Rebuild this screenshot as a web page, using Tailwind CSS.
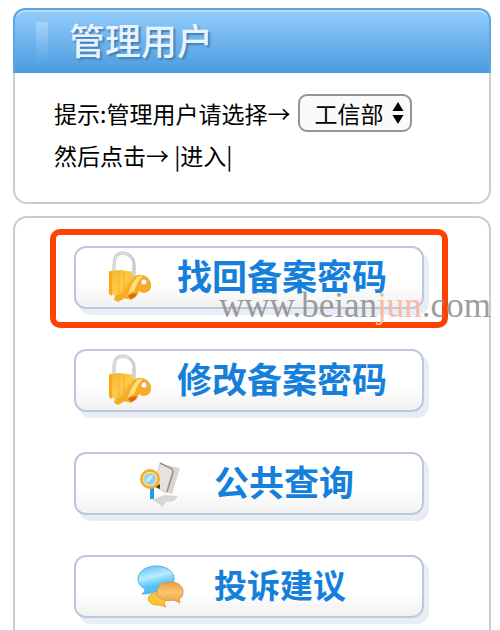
<!DOCTYPE html>
<html lang="zh-CN">
  <head>
    <meta charset="UTF-8" />
    <meta name="viewport" content="width=device-width, initial-scale=1.0" />
    <script src="https://cdn.jsdelivr.net/npm/@tailwindcss/browser@4"></script>
    <title>管理用户</title>
  </head>
  <body class="flex h-screen flex-col gap-3 overflow-hidden bg-white pt-2 pr-[9px] pl-[13px] font-['Noto_Sans_CJK_SC',sans-serif] text-black">
    <!-- shared icon: padlock with key -->
    <svg class="absolute size-0">
      <defs>
        <linearGradient id="gold" x1="0" y1="0" x2="1" y2="1">
          <stop offset="0" stop-color="#fbb52a" />
          <stop offset="0.5" stop-color="#fdca48" />
          <stop offset="1" stop-color="#f0931b" />
        </linearGradient>
        <symbol id="lock" viewBox="0 0 46 54">
          <path d="M7 24V14C7 5 11 2 16 2s11 5 11 12v10" fill="none" stroke="#bcbec2" stroke-width="3" />
          <path d="M7 23V14C7 6 11 2 16 2s10 5 10 12" fill="none" stroke="#e3e4e6" stroke-width="1.500" />
          <path d="M2 20l11-1 15 2 1 22-8 5-19-5z" fill="url(#gold)" />
          <path d="M2 21v22l3 2V21z" fill="#f9a71b" />
          <path d="M12 20v22M17 21v20" stroke="#f6b13a" stroke-width="1" />
          <path d="M26 28c2-5 10-6 15-1 4 4 4 10 1 13-4 3-8 2-10 0l-2 5-6 4-6-2-7 4-4-2 1-4 8-3 4-7z" fill="#f8ab24" />
          <path d="M25 33l5-7 6-2-5 7-4 9-6 3z" fill="#fee07a" />
          <path d="M24 43l6-1-2 4-4 2-3-3z" fill="#d96a13" />
          <circle cx="37" cy="31" r="3" fill="#fff" stroke="#d9b675" stroke-width="1" />
          <path d="M27 14v11" stroke="#cfd0d3" stroke-width="3" />
        </symbol>
      </defs>
    </svg>

    <section class="h-[196px] shrink-0 rounded-[14px] border-2 border-[#cbcccd] bg-white">
      <header class="-mx-0.5 -mt-0.5 flex h-[65px] items-center rounded-t-[12px] border-2 border-b-0 border-[#5ba6e5] bg-linear-to-b from-[#93cdfb] to-[#4a9ade] pl-[21px] inset-shadow-[0_2px_0_#b8dcfa]">
        <span class="h-10 w-3 bg-linear-to-b from-[#a6d5fc] to-[#57a5e4]"></span>
        <h1 class="mb-1.5 ml-[21px] text-[36px] leading-[48px] font-medium text-[#eaf3fc] text-shadow-[2px_2px_2px_#3f7fb8]">管理用户</h1>
      </header>
      <form class="pt-[19px] pl-[39px] text-[23px] leading-[42px]">
        <div class="flex items-center">
          <label for="agency">提示:管理用户请选择→</label>
          <div class="relative ml-2 flex">
            <select id="agency" class="h-[38px] w-[114px] appearance-none rounded-[9px] border-2 border-[#949494] bg-[#fafafa] pl-[14px] leading-8">
              <option>工信部</option>
            </select>
            <svg class="pointer-events-none absolute top-2 right-2 h-[22px] w-3" viewBox="0 0 12 22">
              <path d="M6 0l5.500 9H.5zM6 22l5.500-9H.5z" fill="#000" />
            </svg>
          </div>
        </div>
        <p>然后点击→ |进入|</p>
      </form>
    </section>

    <main class="flex-1 rounded-t-[14px] border-2 border-b-0 border-[#cbcccd] pt-7 pr-[65px] pl-[59px]">
      <ul class="flex flex-col gap-10 text-[35px] leading-[50px] font-bold text-[#1580dc]">
        <li class="relative">
          <button class="flex h-[63px] w-full items-center rounded-[12px] border-2 border-[#bcc6df] bg-linear-to-b from-white from-60% to-[#f1f1f2] pl-[31px] shadow-[5px_6px_0_#e8ecf4]">
            <svg class="h-[54px] w-[46px]"><use href="#lock" /></svg>
            <span class="mb-1.5 ml-6">找回备案密码</span>
          </button>
          <div class="pointer-events-none absolute -inset-x-6 -top-[17px] -bottom-[19px] rounded-[10px] border-6 border-[#ff4200]"></div>
          <p class="pointer-events-none absolute top-10 left-[145px] font-['Liberation_Serif',serif] text-[35px] leading-10 font-normal whitespace-nowrap text-[#8f8f8f]/90">www.beian<span class="text-[#fbb9a0]">jun</span>.com</p>
        </li>
        <li>
          <button class="flex h-[63px] w-full items-center rounded-[12px] border-2 border-[#bcc6df] bg-linear-to-b from-white from-60% to-[#f1f1f2] pl-[31px] shadow-[5px_6px_0_#e8ecf4]">
            <svg class="h-[54px] w-[46px]"><use href="#lock" /></svg>
            <span class="mb-1.5 ml-6">修改备案密码</span>
          </button>
        </li>
        <li>
          <button class="flex h-[63px] w-full items-center rounded-[12px] border-2 border-[#bcc6df] bg-linear-to-b from-white from-60% to-[#f1f1f2] pl-[64px] shadow-[5px_6px_0_#e8ecf4]">
            <!-- magnifier over papers -->
            <svg class="h-12 w-[46px]" viewBox="0 0 46 48">
              <path d="M12 40l12-5 14 1-4 5-8 1-4 5-4-4z" fill="#d6d6d8" />
              <path d="M27 5l13 3-8 26-7-2z" fill="#d9d7d5" />
              <path d="M20 3l13 6-7 24-12-7z" fill="#e7e3dc" stroke="#d6d2ca" />
              <path d="M20 3l12 6 1 3-6 20" fill="none" stroke="#96918e" stroke-width="1.500" />
              <path d="M15 27l5 2v-5z" fill="#4d4038" />
              <path d="M12 28v11" stroke="#1c9cf0" stroke-width="4" />
              <circle cx="10" cy="19" r="8.500" fill="#8fcff5" stroke="#f4ae2e" stroke-width="3" />
              <circle cx="10" cy="19" r="6.500" fill="none" stroke="#fbdd9b" stroke-width="1.500" />
              <path d="M6 22c0-4 3-7 7-7-1 4-3 7-7 7z" fill="#caebfd" />
            </svg>
            <span class="mb-1.5 ml-7">公共查询</span>
          </button>
        </li>
        <li>
          <button class="flex h-[63px] w-full items-center rounded-[12px] border-2 border-[#bcc6df] bg-linear-to-b from-white from-60% to-[#f1f1f2] pl-[60px] shadow-[5px_6px_0_#e8ecf4]">
            <!-- speech bubbles -->
            <svg class="h-12 w-12" viewBox="0 0 48 48">
              <defs>
                <linearGradient id="sky" x1="0" y1="0" x2="0.300" y2="1">
                  <stop offset="0" stop-color="#58b9f5" />
                  <stop offset="0.450" stop-color="#b9ebff" />
                  <stop offset="0.800" stop-color="#4fc0fa" />
                </linearGradient>
                <linearGradient id="amber" x1="0" y1="0" x2="0" y2="1">
                  <stop offset="0" stop-color="#e9a043" />
                  <stop offset="0.500" stop-color="#fac46e" />
                  <stop offset="1" stop-color="#efa13a" />
                </linearGradient>
              </defs>
              <path d="M20 3c10 0 18 5 18 13s-8 13-18 13c-4 0-6 2-14 2 3-2 3-4 3-5C4 23 2 20 2 15 3 8 11 3 20 3z" fill="url(#sky)" stroke="#4baee9" />
              <path d="M13 33c2-3 8-4 13-2 4 2 5 6 2 9l2 4-6-2c-7 1-14-3-11-9z" fill="#fbc33b" stroke="#eba52e" />
              <path d="M34 19c8 0 13 4 13 10 0 4-2 6-4 7l1 4-6-3c-10 2-17-2-17-8s5-10 13-10z" fill="url(#amber)" stroke="#d99742" />
            </svg>
            <span class="mb-1.5 ml-[30px] text-[33px]">投诉建议</span>
          </button>
        </li>
      </ul>
    </main>
  </body>
</html>
